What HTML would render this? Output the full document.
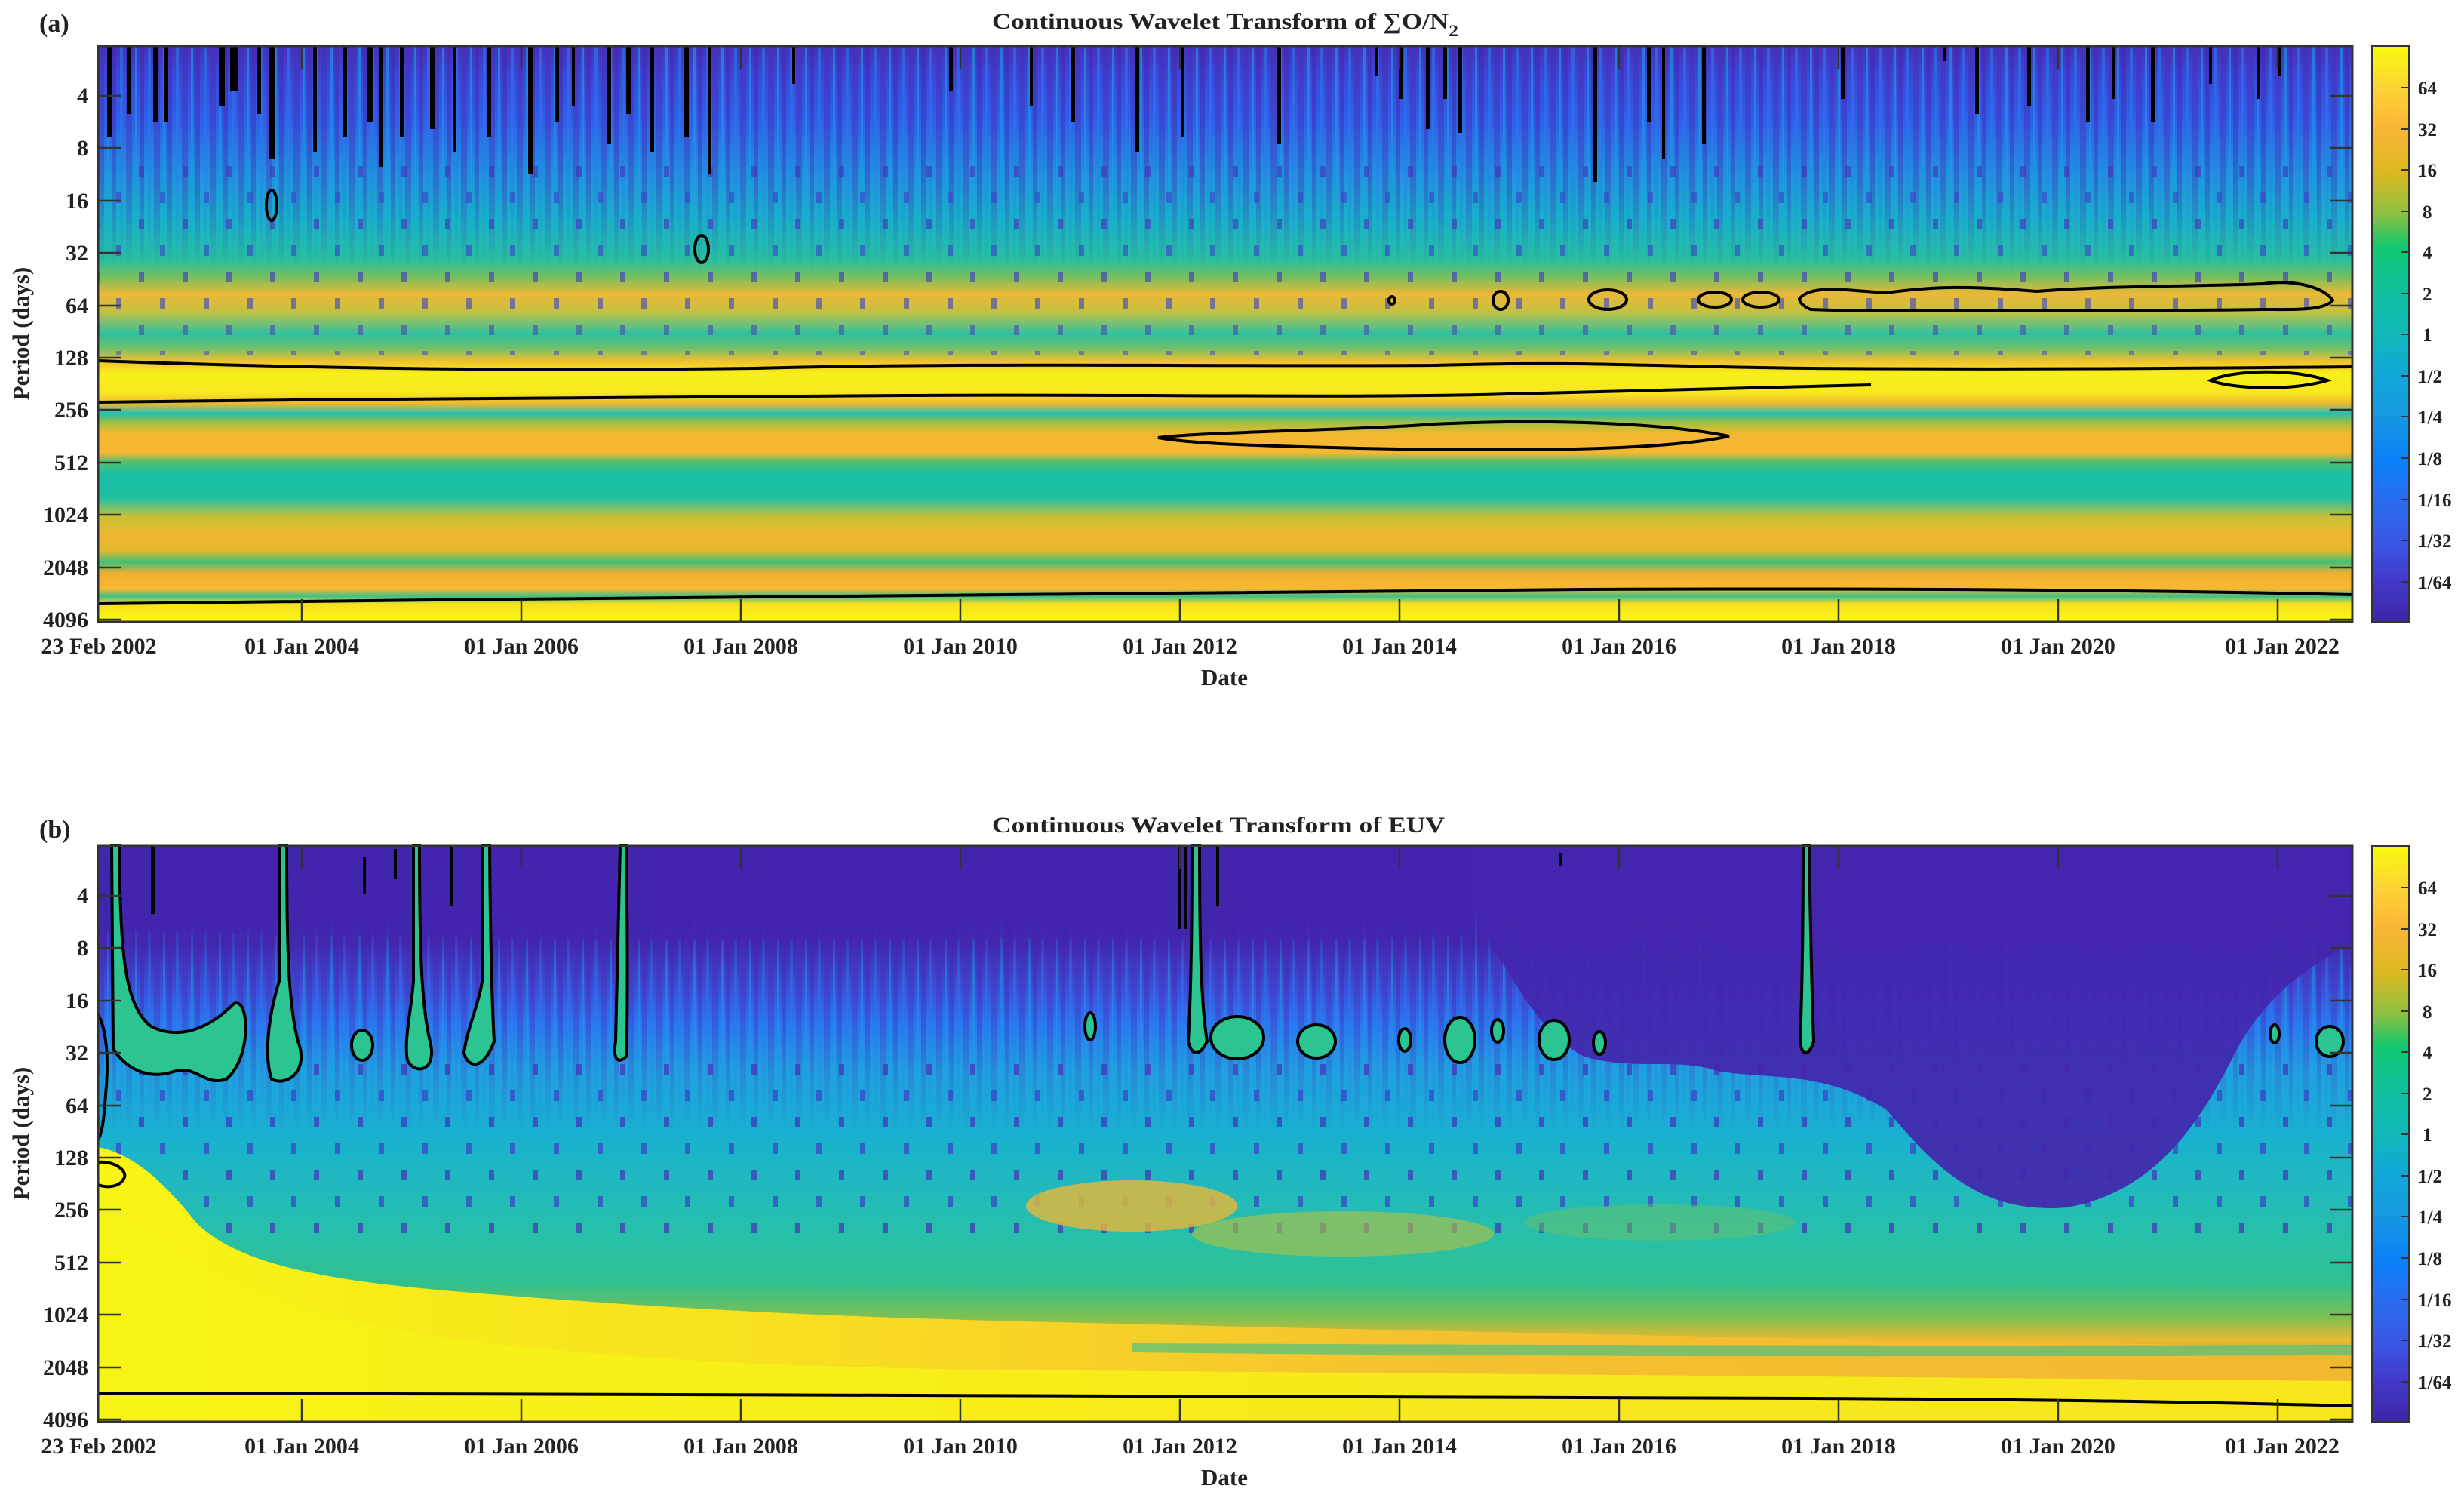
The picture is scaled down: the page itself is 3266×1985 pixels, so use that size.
<!DOCTYPE html>
<html><head><meta charset="utf-8">
<style>
html,body{margin:0;padding:0;background:#fff;}
svg{display:block;}
text{font-family:"Liberation Serif",serif;font-weight:bold;fill:#222;}
</style></head>
<body>
<svg width="3266" height="1985" viewBox="0 0 3266 1985" xmlns="http://www.w3.org/2000/svg">
<defs>
<linearGradient id="ga" x1="0" y1="0" x2="0" y2="1">
<stop offset="0" stop-color="#4630b8"/>
<stop offset="0.05" stop-color="#3a48d8"/>
<stop offset="0.13" stop-color="#3060e8"/>
<stop offset="0.22" stop-color="#2090e0"/>
<stop offset="0.30" stop-color="#18b0c8"/>
<stop offset="0.37" stop-color="#28c0a0"/>
<stop offset="0.40" stop-color="#70c060"/>
<stop offset="0.43" stop-color="#eab838"/>
<stop offset="0.46" stop-color="#c8c040"/>
<stop offset="0.50" stop-color="#30c0a0"/>
<stop offset="0.525" stop-color="#70c068"/>
<stop offset="0.547" stop-color="#f0c030"/>
<stop offset="0.569" stop-color="#f8f018"/>
<stop offset="0.602" stop-color="#f8e820"/>
<stop offset="0.621" stop-color="#f0b830"/>
<stop offset="0.638" stop-color="#20c0b0"/>
<stop offset="0.654" stop-color="#a0c040"/>
<stop offset="0.674" stop-color="#f5b830"/>
<stop offset="0.706" stop-color="#f5b830"/>
<stop offset="0.722" stop-color="#50c070"/>
<stop offset="0.746" stop-color="#18c0a8"/>
<stop offset="0.785" stop-color="#20c0a0"/>
<stop offset="0.818" stop-color="#c8c038"/>
<stop offset="0.85" stop-color="#f0b830"/>
<stop offset="0.877" stop-color="#e0b830"/>
<stop offset="0.896" stop-color="#40c078"/>
<stop offset="0.916" stop-color="#f0b030"/>
<stop offset="0.942" stop-color="#f8b830"/>
<stop offset="0.956" stop-color="#40c088"/>
<stop offset="0.969" stop-color="#f8e020"/>
<stop offset="1" stop-color="#f8fa10"/>
</linearGradient>
<linearGradient id="gb" x1="0" y1="0" x2="0" y2="1">
<stop offset="0" stop-color="#4326ad"/>
<stop offset="0.17" stop-color="#4326ad"/>
<stop offset="0.25" stop-color="#3a52da"/>
<stop offset="0.31" stop-color="#2a78f0"/>
<stop offset="0.39" stop-color="#20a0e0"/>
<stop offset="0.50" stop-color="#18b0d0"/>
<stop offset="0.58" stop-color="#20b8c0"/>
<stop offset="0.68" stop-color="#28c0a8"/>
<stop offset="0.76" stop-color="#30c090"/>
<stop offset="0.82" stop-color="#80c050"/>
<stop offset="0.86" stop-color="#f0b830"/>
<stop offset="0.89" stop-color="#40c080"/>
<stop offset="0.91" stop-color="#f8c030"/>
<stop offset="0.94" stop-color="#f8e820"/>
<stop offset="1" stop-color="#f8fa10"/>
</linearGradient>
<linearGradient id="gc" x1="0" y1="0" x2="0" y2="1">
<stop offset="0" stop-color="#f9fb0e"/>
<stop offset="0.07" stop-color="#fcd534"/>
<stop offset="0.14" stop-color="#fbb638"/>
<stop offset="0.22" stop-color="#dcb820"/>
<stop offset="0.29" stop-color="#90c040"/>
<stop offset="0.35" stop-color="#10c870"/>
<stop offset="0.43" stop-color="#10c0a0"/>
<stop offset="0.50" stop-color="#10b8b8"/>
<stop offset="0.57" stop-color="#10a8d8"/>
<stop offset="0.64" stop-color="#1898e0"/>
<stop offset="0.72" stop-color="#0a80f8"/>
<stop offset="0.79" stop-color="#2a6cf0"/>
<stop offset="0.86" stop-color="#3a58e8"/>
<stop offset="0.93" stop-color="#4238c8"/>
<stop offset="1" stop-color="#3e26a8"/>
</linearGradient>
<linearGradient id="fade" x1="0" y1="0" x2="0" y2="1">
<stop offset="0" stop-color="#fff" stop-opacity="1"/>
<stop offset="0.6" stop-color="#fff" stop-opacity="0.6"/>
<stop offset="1" stop-color="#fff" stop-opacity="0"/>
</linearGradient>
<linearGradient id="fade2" x1="0" y1="0" x2="0" y2="1">
<stop offset="0" stop-color="#fff" stop-opacity="0"/>
<stop offset="0.3" stop-color="#fff" stop-opacity="0.8"/>
<stop offset="0.6" stop-color="#fff" stop-opacity="0.5"/>
<stop offset="1" stop-color="#fff" stop-opacity="0"/>
</linearGradient>
<mask id="ma"><rect x="130" y="61" width="2988" height="300" fill="url(#fade)"/></mask>
<mask id="mb"><rect x="130" y="1200" width="2988" height="300" fill="url(#fade2)"/></mask>
<pattern id="st" width="37" height="60" patternUnits="userSpaceOnUse">
<rect x="0" y="0" width="6" height="60" fill="#4428b0"/>
<rect x="11" y="0" width="4" height="60" fill="#2a7cf0"/>
<rect x="19" y="0" width="8" height="60" fill="#4630b8"/>
<rect x="31" y="0" width="3" height="60" fill="#1aa8e8"/>
</pattern>
<pattern id="dots" width="58" height="70" patternUnits="userSpaceOnUse">
<rect x="10" y="10" width="7" height="14" fill="#4630b8"/>
<rect x="38" y="45" width="7" height="14" fill="#3a40c8"/>
</pattern>
<linearGradient id="yl" x1="0" y1="0" x2="1" y2="0">
<stop offset="0" stop-color="#f9f514"/>
<stop offset="0.3" stop-color="#f8e020"/>
<stop offset="0.6" stop-color="#f5c030"/>
<stop offset="1" stop-color="#f2b830"/>
</linearGradient>
</defs>

<!-- Panel a -->
<text x="52" y="42" font-size="34">(a)</text>
<text x="1315" y="38" font-size="30" textLength="618" lengthAdjust="spacingAndGlyphs">Continuous Wavelet Transform of ∑O/N<tspan font-size="22" dy="10">2</tspan></text>
<rect x="130" y="61" width="2988" height="763" fill="url(#ga)"/>
<rect x="130" y="61" width="2988" height="300" fill="url(#st)" mask="url(#ma)" opacity="0.6"/>
<rect x="130" y="200" width="2988" height="230" fill="url(#dots)" opacity="0.6"/>
<rect x="130" y="430" width="2988" height="40" fill="url(#dots)" opacity="0.5"/>
<g fill="none" stroke="#000" stroke-width="4">
<path d="M130,478 C400,488 700,492 1000,488 C1300,480 1600,486 1900,484 C2100,478 2200,486 2400,488 C2700,490 2900,488 3118,486"/>
<path d="M130,533 C500,528 900,526 1200,524 C1500,522 1800,528 2000,522 C2200,516 2400,512 2480,510"/>
<path d="M2930,504 C2960,490 3040,488 3085,504 C3040,518 2960,516 2930,504 Z"/>
<path d="M1535,580 C1600,572 1800,570 1900,562 C2050,555 2200,560 2292,578 C2200,598 2000,598 1800,594 C1650,590 1580,588 1535,580 Z"/>
<path d="M2385,396 C2400,376 2450,385 2500,388 C2560,380 2600,378 2700,386 C2800,378 2900,380 3000,376 C3040,370 3080,380 3092,398 C3080,412 3040,410 3000,410 C2900,412 2800,410 2700,412 C2600,410 2500,414 2400,410 C2390,406 2385,400 2385,396 Z"/>
<ellipse cx="1989" cy="398" rx="10" ry="12"/>
<ellipse cx="2131" cy="397" rx="25" ry="13"/>
<ellipse cx="2273" cy="397" rx="22" ry="10"/>
<ellipse cx="2334" cy="397" rx="24" ry="10"/>
<ellipse cx="1845" cy="398" rx="4" ry="5"/>
<ellipse cx="930" cy="330" rx="9" ry="18"/>
<ellipse cx="360" cy="272" rx="7" ry="20"/>
<path d="M130,800 C800,792 1500,786 2100,781 C2600,779 2900,783 3118,788"/>
</g>
<g fill="#000">
<rect x="142" y="61" width="6" height="120"/><rect x="168" y="61" width="5" height="90"/>
<rect x="203" y="61" width="7" height="100"/><rect x="218" y="61" width="5" height="100"/>
<rect x="290" y="61" width="8" height="80"/><rect x="305" y="61" width="10" height="60"/>
<rect x="340" y="61" width="6" height="90"/><rect x="356" y="61" width="8" height="150"/>
<rect x="415" y="61" width="5" height="140"/><rect x="455" y="61" width="5" height="120"/>
<rect x="486" y="61" width="8" height="100"/><rect x="502" y="61" width="6" height="160"/>
<rect x="530" y="61" width="5" height="120"/><rect x="570" y="61" width="6" height="110"/>
<rect x="600" y="61" width="5" height="140"/><rect x="645" y="61" width="6" height="120"/>
<rect x="700" y="61" width="7" height="170"/><rect x="735" y="61" width="6" height="100"/>
<rect x="758" y="61" width="4" height="80"/><rect x="805" y="61" width="5" height="130"/>
<rect x="830" y="61" width="6" height="90"/><rect x="862" y="61" width="5" height="140"/>
<rect x="907" y="61" width="6" height="120"/><rect x="938" y="61" width="5" height="170"/>
<rect x="1050" y="61" width="4" height="50"/><rect x="1258" y="61" width="5" height="60"/>
<rect x="1365" y="61" width="4" height="80"/><rect x="1420" y="61" width="5" height="100"/>
<rect x="1505" y="61" width="5" height="140"/><rect x="1565" y="61" width="5" height="120"/>
<rect x="1693" y="61" width="5" height="130"/><rect x="1822" y="61" width="4" height="40"/>
<rect x="1855" y="61" width="5" height="70"/>
<rect x="1890" y="61" width="5" height="110"/><rect x="1913" y="61" width="5" height="70"/>
<rect x="1933" y="61" width="5" height="115"/><rect x="2112" y="61" width="5" height="180"/>
<rect x="2183" y="61" width="5" height="100"/><rect x="2203" y="61" width="4" height="150"/>
<rect x="2256" y="61" width="5" height="130"/><rect x="2440" y="61" width="5" height="70"/>
<rect x="2575" y="61" width="4" height="20"/><rect x="2618" y="61" width="5" height="90"/>
<rect x="2687" y="61" width="5" height="80"/><rect x="2765" y="61" width="5" height="100"/>
<rect x="2800" y="61" width="4" height="70"/><rect x="2851" y="61" width="5" height="100"/>
<rect x="2928" y="61" width="4" height="50"/><rect x="2991" y="61" width="4" height="70"/>
<rect x="3020" y="61" width="4" height="40"/>
</g>
<rect x="130" y="61" width="2988" height="763" fill="none" stroke="#333" stroke-width="3"/>

<!-- Panel b -->
<text x="52" y="1110" font-size="34">(b)</text>
<text x="1315" y="1103" font-size="30" textLength="600" lengthAdjust="spacingAndGlyphs">Continuous Wavelet Transform of EUV</text>
<rect x="130" y="1121" width="2988" height="763" fill="url(#gb)"/>
<rect x="130" y="1200" width="2988" height="300" fill="url(#st)" mask="url(#mb)" opacity="0.6"/>
<rect x="130" y="1400" width="2988" height="250" fill="url(#dots)" opacity="0.7"/>
<path d="M1950,1121 L3118,1121 L3118,1250 C3060,1280 3000,1320 2960,1400 C2910,1500 2850,1580 2740,1600 C2620,1610 2560,1540 2500,1470 C2420,1420 2350,1430 2280,1420 C2220,1400 2170,1420 2100,1400 C2040,1370 2010,1300 1980,1260 C1960,1230 1950,1180 1950,1121 Z" fill="#4326ad" opacity="0.92"/>
<path d="M130,1121 L1950,1121 L1950,1240 C1700,1250 1400,1240 1200,1245 C900,1250 500,1240 130,1235 Z" fill="#4326ad" opacity="0.85"/>
<ellipse cx="1500" cy="1598" rx="140" ry="34" fill="#e8b838" opacity="0.8"/>
<ellipse cx="1780" cy="1635" rx="200" ry="30" fill="#b8c040" opacity="0.6"/>
<ellipse cx="2200" cy="1620" rx="180" ry="24" fill="#70c060" opacity="0.45"/>
<path d="M130,1520 C180,1530 220,1570 260,1620 C320,1680 450,1700 650,1715 C900,1735 1100,1745 1400,1752 C1800,1762 2400,1775 3118,1785 L3118,1884 L130,1884 Z" fill="url(#yl)"/>
<path d="M130,1580 C220,1640 330,1730 560,1770 C800,1800 1000,1810 1300,1815 L3118,1830 L3118,1884 L130,1884 Z" fill="#f8f216" opacity="0.8"/>
<path d="M1500,1780 C2000,1782 2500,1784 3118,1782 L3118,1796 C2500,1798 2000,1798 1500,1792 Z" fill="#30c090" opacity="0.6"/>
<g fill="#2cc490" stroke="#000" stroke-width="4">
<path d="M148,1121 L158,1121 C160,1250 162,1330 200,1360 C240,1380 280,1360 310,1330 C330,1320 335,1400 300,1430 C270,1440 260,1410 230,1420 C200,1430 170,1420 150,1390 Z"/>
<path d="M370,1121 L380,1121 C380,1250 382,1330 395,1380 C410,1420 380,1440 360,1430 C350,1400 355,1350 370,1300 Z"/>
<path d="M548,1121 L556,1121 C556,1250 558,1330 570,1380 C580,1420 550,1425 540,1405 C535,1380 545,1340 548,1300 Z"/>
<path d="M639,1121 L649,1121 C650,1250 652,1330 655,1380 C640,1420 620,1415 615,1395 C620,1360 635,1330 639,1300 Z"/>
<path d="M822,1121 L830,1121 C832,1250 832,1350 830,1400 C820,1410 812,1405 816,1380 C818,1300 820,1200 822,1121 Z"/>
<path d="M1580,1121 L1590,1121 C1590,1250 1592,1330 1600,1380 C1590,1400 1580,1400 1575,1380 C1578,1330 1580,1250 1580,1121 Z"/>
<path d="M2390,1121 L2398,1121 C2400,1250 2402,1330 2404,1380 C2398,1400 2388,1400 2386,1380 C2388,1330 2390,1250 2390,1121 Z"/>
<ellipse cx="1745" cy="1380" rx="25" ry="22"/>
<ellipse cx="1640" cy="1375" rx="35" ry="28"/>
<ellipse cx="1935" cy="1378" rx="20" ry="30"/>
<ellipse cx="1985" cy="1366" rx="8" ry="15"/>
<ellipse cx="2060" cy="1378" rx="20" ry="26"/>
<ellipse cx="2120" cy="1382" rx="8" ry="15"/>
<ellipse cx="1862" cy="1378" rx="8" ry="15"/>
<ellipse cx="1445" cy="1360" rx="7" ry="18"/>
<ellipse cx="3015" cy="1370" rx="6" ry="12"/>
<ellipse cx="3088" cy="1380" rx="18" ry="20"/>
<ellipse cx="480" cy="1385" rx="14" ry="20"/>
</g>
<g fill="#000">
<rect x="200" y="1121" width="5" height="90"/><rect x="481" y="1135" width="4" height="50"/>
<rect x="522" y="1125" width="4" height="40"/><rect x="596" y="1121" width="5" height="80"/>
<rect x="1562" y="1121" width="4" height="110"/><rect x="1570" y="1121" width="4" height="110"/>
<rect x="1612" y="1121" width="4" height="80"/><rect x="2067" y="1130" width="4" height="18"/>
</g>
<g fill="none" stroke="#000" stroke-width="4">
<path d="M130,1345 C140,1360 145,1400 140,1450 C138,1480 136,1500 130,1510"/>
<path d="M130,1540 C150,1538 168,1550 165,1560 C160,1572 145,1575 130,1570"/>
<path d="M130,1846 C900,1848 1800,1850 2400,1853 C2800,1855 3000,1860 3118,1863"/>
</g>
<rect x="130" y="1121" width="2988" height="763" fill="none" stroke="#333" stroke-width="3"/>

<!-- Axis ticks & labels -->
<g>
<g stroke="#333" stroke-width="2.5">
<path d="M130,127h30M130,196h30M130,266h30M130,335h30M130,405h30M130,474h30M130,543h30M130,613h30M130,682h30M130,752h30M130,821h30"/>
<path d="M3118,127h-30M3118,196h-30M3118,266h-30M3118,335h-30M3118,405h-30M3118,474h-30M3118,543h-30M3118,613h-30M3118,682h-30M3118,752h-30M3118,821h-30"/>
<path d="M400,824v-30M691,824v-30M982,824v-30M1273,824v-30M1564,824v-30M1855,824v-30M2146,824v-30M2437,824v-30M2728,824v-30M3019,824v-30"/>
<path d="M400,61v30M691,61v30M982,61v30M1273,61v30M1564,61v30M1855,61v30M2146,61v30M2437,61v30M2728,61v30M3019,61v30"/>
<path d="M130,1187h30M130,1256h30M130,1326h30M130,1395h30M130,1465h30M130,1534h30M130,1603h30M130,1673h30M130,1742h30M130,1812h30M130,1881h30"/>
<path d="M3118,1187h-30M3118,1256h-30M3118,1326h-30M3118,1395h-30M3118,1465h-30M3118,1534h-30M3118,1603h-30M3118,1673h-30M3118,1742h-30M3118,1812h-30M3118,1881h-30"/>
<path d="M400,1884v-30M691,1884v-30M982,1884v-30M1273,1884v-30M1564,1884v-30M1855,1884v-30M2146,1884v-30M2437,1884v-30M2728,1884v-30M3019,1884v-30"/>
<path d="M400,1121v30M691,1121v30M982,1121v30M1273,1121v30M1564,1121v30M1855,1121v30M2146,1121v30M2437,1121v30M2728,1121v30M3019,1121v30"/>
</g>
<g font-size="30" text-anchor="end">
<text x="117" y="137">4</text><text x="117" y="206">8</text><text x="117" y="276">16</text><text x="117" y="345">32</text><text x="117" y="415">64</text><text x="117" y="484">128</text><text x="117" y="553">256</text><text x="117" y="623">512</text><text x="117" y="692">1024</text><text x="117" y="762">2048</text><text x="117" y="831">4096</text>
<text x="117" y="1197">4</text><text x="117" y="1266">8</text><text x="117" y="1336">16</text><text x="117" y="1405">32</text><text x="117" y="1475">64</text><text x="117" y="1544">128</text><text x="117" y="1613">256</text><text x="117" y="1683">512</text><text x="117" y="1752">1024</text><text x="117" y="1822">2048</text><text x="117" y="1891">4096</text>
</g>
<g font-size="30" text-anchor="middle">
<text x="131" y="866">23 Feb 2002</text><text x="400" y="866">01 Jan 2004</text><text x="691" y="866">01 Jan 2006</text><text x="982" y="866">01 Jan 2008</text><text x="1273" y="866">01 Jan 2010</text><text x="1564" y="866">01 Jan 2012</text><text x="1855" y="866">01 Jan 2014</text><text x="2146" y="866">01 Jan 2016</text><text x="2437" y="866">01 Jan 2018</text><text x="2728" y="866">01 Jan 2020</text><text x="3025" y="866">01 Jan 2022</text>
<text x="131" y="1926">23 Feb 2002</text><text x="400" y="1926">01 Jan 2004</text><text x="691" y="1926">01 Jan 2006</text><text x="982" y="1926">01 Jan 2008</text><text x="1273" y="1926">01 Jan 2010</text><text x="1564" y="1926">01 Jan 2012</text><text x="1855" y="1926">01 Jan 2014</text><text x="2146" y="1926">01 Jan 2016</text><text x="2437" y="1926">01 Jan 2018</text><text x="2728" y="1926">01 Jan 2020</text><text x="3025" y="1926">01 Jan 2022</text>
<text x="1623" y="908" font-size="31">Date</text>
<text x="1623" y="1968" font-size="31">Date</text>
<text transform="translate(38,442) rotate(-90)" font-size="31">Period (days)</text>
<text transform="translate(38,1502) rotate(-90)" font-size="31">Period (days)</text>
</g>
</g>

<!-- Colorbars -->
<g>
<rect x="3144" y="61" width="49" height="763" fill="url(#gc)" stroke="#333" stroke-width="2"/>
<rect x="3144" y="1121" width="49" height="763" fill="url(#gc)" stroke="#333" stroke-width="2"/>
<g stroke="#333" stroke-width="2">
<path d="M3193,116h-10M3193,171h-10M3193,225h-10M3193,280h-10M3193,334h-10M3193,389h-10M3193,443h-10M3193,498h-10M3193,552h-10M3193,607h-10M3193,662h-10M3193,716h-10M3193,771h-10"/>
<path d="M3193,1176h-10M3193,1231h-10M3193,1285h-10M3193,1340h-10M3193,1394h-10M3193,1449h-10M3193,1503h-10M3193,1558h-10M3193,1612h-10M3193,1667h-10M3193,1722h-10M3193,1776h-10M3193,1831h-10"/>
</g>
<g font-size="25">
<text x="3205" y="125">64</text><text x="3205" y="180">32</text><text x="3205" y="234">16</text><text x="3211" y="289">8</text><text x="3211" y="343">4</text><text x="3211" y="398">2</text><text x="3211" y="452">1</text><text x="3205" y="507">1/2</text><text x="3205" y="561">1/4</text><text x="3205" y="616">1/8</text><text x="3205" y="671">1/16</text><text x="3205" y="725">1/32</text><text x="3205" y="780">1/64</text>
<text x="3205" y="1185">64</text><text x="3205" y="1240">32</text><text x="3205" y="1294">16</text><text x="3211" y="1349">8</text><text x="3211" y="1403">4</text><text x="3211" y="1458">2</text><text x="3211" y="1512">1</text><text x="3205" y="1567">1/2</text><text x="3205" y="1621">1/4</text><text x="3205" y="1676">1/8</text><text x="3205" y="1731">1/16</text><text x="3205" y="1785">1/32</text><text x="3205" y="1840">1/64</text>
</g>
</g>
</svg>
</body></html>
